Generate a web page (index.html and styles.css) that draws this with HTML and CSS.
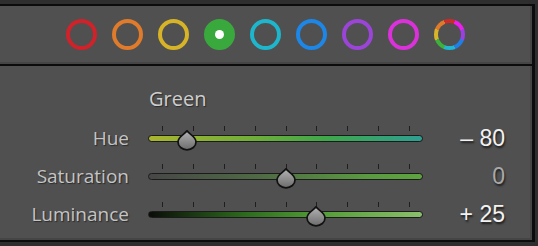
FILE: index.html
```html
<!DOCTYPE html>
<html lang="en">
<head>
    <meta charset="UTF-8">
    <title>Color Mixer</title>
    <link rel="stylesheet" href="styles.css">
</head>
<body>
    <div class="mixer">
        <div class="swatches">
            <span class="swatch red"></span>
            <span class="swatch orange"></span>
            <span class="swatch yellow"></span>
            <span class="swatch green selected"></span>
            <span class="swatch aqua"></span>
            <span class="swatch blue"></span>
            <span class="swatch purple"></span>
            <span class="swatch magenta"></span>
            <span class="swatch all"></span>
        </div>
        <div class="sliders">
            <div class="title">Green</div>

            <div class="label">Hue</div>
            <div class="slider hue">
                <div class="scale">
                    <span class="tick" style="left: 0%"></span>
                    <span class="tick" style="left: 12.5%"></span>
                    <span class="tick" style="left: 25%"></span>
                    <span class="tick" style="left: 37.5%"></span>
                    <span class="tick" style="left: 50%"></span>
                    <span class="tick" style="left: 62.5%"></span>
                    <span class="tick" style="left: 75%"></span>
                    <span class="tick" style="left: 87.5%"></span>
                    <span class="tick" style="left: 100%"></span>
                    <svg class="thumb" style="left: 10%" viewBox="0 0 20 20"><use href="#drop"/></svg>
                </div>
            </div>
            <div class="value">&ndash; 80</div>

            <div class="label">Saturation</div>
            <div class="slider sat">
                <div class="scale">
                    <span class="tick" style="left: 0%"></span>
                    <span class="tick" style="left: 12.5%"></span>
                    <span class="tick" style="left: 25%"></span>
                    <span class="tick" style="left: 37.5%"></span>
                    <span class="tick" style="left: 50%"></span>
                    <span class="tick" style="left: 62.5%"></span>
                    <span class="tick" style="left: 75%"></span>
                    <span class="tick" style="left: 87.5%"></span>
                    <span class="tick" style="left: 100%"></span>
                    <svg class="thumb" style="left: 50%" viewBox="0 0 20 20"><use href="#drop"/></svg>
                </div>
            </div>
            <div class="value zero">0</div>

            <div class="label">Luminance</div>
            <div class="slider lum">
                <div class="scale">
                    <span class="tick" style="left: 0%"></span>
                    <span class="tick" style="left: 12.5%"></span>
                    <span class="tick" style="left: 25%"></span>
                    <span class="tick" style="left: 37.5%"></span>
                    <span class="tick" style="left: 50%"></span>
                    <span class="tick" style="left: 62.5%"></span>
                    <span class="tick" style="left: 75%"></span>
                    <span class="tick" style="left: 87.5%"></span>
                    <span class="tick" style="left: 100%"></span>
                    <svg class="thumb" style="left: 62.5%" viewBox="0 0 20 20"><use href="#drop"/></svg>
                </div>
            </div>
            <div class="value">+ 25</div>
        </div>
    </div>

    <svg width="0" height="0" class="defs">
        <defs>
            <linearGradient id="dropFill" x1="0" y1="0" x2="0" y2="1">
                <stop offset="0" stop-color="#b4b4b4"/>
                <stop offset="1" stop-color="#6c6c6c"/>
            </linearGradient>
            <path id="drop" d="M10 0.8 C12 4 19 6.5 19 12 A9 7.8 0 0 1 1 12 C1 6.5 8 4 10 0.8 Z"
                  fill="url(#dropFill)" stroke="#111" stroke-width="1.7" stroke-linejoin="round"/>
        </defs>
    </svg>
</body>
</html>
```

FILE: styles.css
```css
body {
    margin: 0;
    padding-top: 4px;
    background-color: #2e2e2e;
    font-family: "Open Sans", "Noto Sans", sans-serif;
}

.mixer {
    width: 532px;
    border-top: 2px solid #0c0c0c;
    border-right: 3px solid #0c0c0c;
    border-bottom: 2px solid #0c0c0c;
    background-color: #0c0c0c;
}

.swatches {
    display: flex;
    justify-content: center;
    align-items: center;
    gap: 15px;
    height: 58px;
    padding-top: 1px;
    box-sizing: border-box;
    background-color: #505050;
    border-bottom: 2px solid #454545;
    border-right: 2px solid #454545;
    margin-bottom: 2px;
}

.swatch {
    position: relative;
    width: 31px;
    height: 31px;
    box-sizing: border-box;
    border: 4px solid;
    border-radius: 50%;
}

.red { border-color: #d0222a; }
.orange { border-color: #df7b2b; }
.yellow { border-color: #d7b327; }
.green { border-color: #3aa93d; }
.aqua { border-color: #1eb6cc; }
.blue { border-color: #1d87e8; }
.purple { border-color: #9b45d8; }
.magenta { border-color: #da31da; }

.selected {
    background-color: #3aa93d;
    display: flex;
    justify-content: center;
    align-items: center;
}

.selected::after {
    content: "";
    width: 9px;
    height: 9px;
    border-radius: 50%;
    background-color: #fff;
}

.all {
    border: none;
    background: conic-gradient(
        #cf2a2a 0deg 22.5deg,
        #ef1ef0 22.5deg 67.5deg,
        #9a3fe0 67.5deg 112.5deg,
        #1f7fe8 112.5deg 157.5deg,
        #1fb8d0 157.5deg 202.5deg,
        #3cb23c 202.5deg 247.5deg,
        #d7b52a 247.5deg 292.5deg,
        #e07a2a 292.5deg 337.5deg,
        #cf2a2a 337.5deg 360deg);
}

.all::after {
    content: "";
    position: absolute;
    inset: 4px;
    border-radius: 50%;
    background-color: #505050;
}

.sliders {
    display: grid;
    grid-template-columns: 129px 275px 63px;
    grid-auto-rows: 38px;
    column-gap: 19px;
    align-items: center;
    height: 174px;
    padding-top: 15px;
    box-sizing: border-box;
    background-color: #505050;
    border-bottom: 2px solid #454545;
    border-right: 2px solid #454545;
}

.title {
    grid-column: 2;
    grid-row: 1;
    align-self: start;
    margin: 4px 0 0 1px;
    font-size: 20px;
    line-height: 27px;
    color: #cecece;
    text-shadow: 1px 1px 1px #2a2a2a;
}

.sliders .title + .label {
    grid-row: 2;
}

.label {
    grid-column: 1;
    text-align: right;
    font-size: 19px;
    color: #c4c4c4;
    text-shadow: 1px 1px 1px #2a2a2a;
}

.slider {
    grid-column: 2;
    position: relative;
    height: 7px;
    padding: 0 13px;
    box-sizing: border-box;
    border: 1px solid #1b1b1b;
    border-radius: 4px;
}

.hue {
    background: linear-gradient(to right, #a9b52e, #6cae3a 40%, #3ea84a 65%, #2e9f92);
}

.sat {
    background: linear-gradient(to right, #474747, #4f6a44 40%, #5a9a40 80%, #5da43f);
}

.lum {
    background: linear-gradient(to right, #0a0d08, #2d6a1e 35%, #4f9a34 60%, #8bbf6c);
}

.scale {
    position: relative;
    height: 100%;
}

.tick {
    position: absolute;
    top: -10px;
    width: 1px;
    height: 5px;
    background-color: #1e1e1e;
}

.thumb {
    position: absolute;
    top: -6px;
    width: 20px;
    height: 20px;
    margin-left: -10px;
    overflow: visible;
}

.value {
    grid-column: 3;
    text-align: right;
    font-family: "Liberation Sans", Arial, sans-serif;
    font-size: 23px;
    color: #f2f2f2;
    text-shadow: 1px 2px 2px #1c1c1c;
}

.zero {
    color: #a9a9a9;
}

.defs {
    position: absolute;
}
```
